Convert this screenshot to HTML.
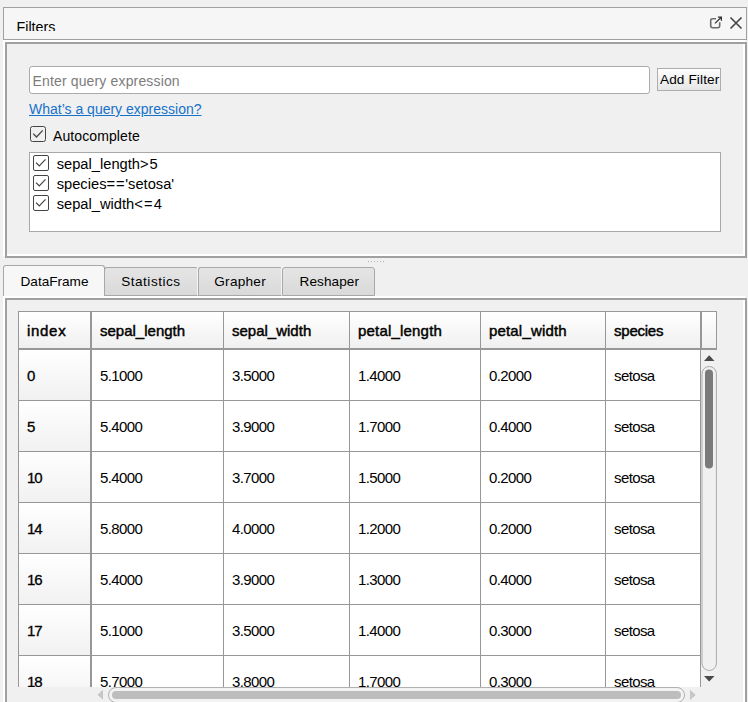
<!DOCTYPE html>
<html><head><meta charset="utf-8">
<style>
*{box-sizing:border-box;margin:0;padding:0}
html,body{width:748px;height:702px;overflow:hidden;background:#f0f0f0;font-family:"Liberation Sans",sans-serif;color:#000}
.a{position:absolute}
.t{position:absolute;white-space:pre;line-height:1}
#title{left:3px;top:7px;width:744px;height:33px;border:1px solid #a0a0a0;background:#f6f6f6}
.fr{position:absolute;border:2px solid #a0a0a0}
.frw{position:absolute;border:2px solid #ffffff}
#q{left:29px;top:66px;width:621px;height:28px;border:1px solid #ababab;border-radius:3px;background:#fff}
#btn{left:657px;top:68px;width:64px;height:23px;border:1px solid #adadad;background:linear-gradient(#fdfdfd,#e6e6e6)}
.cb{position:absolute;border:1.6px solid #444;border-radius:2.5px;background:#f0f0f0}
#list{left:29px;top:152px;width:692px;height:80px;border:1px solid #a8a8a8;background:#fff}
.tab{position:absolute;border:1px solid #a8a8a8;border-radius:3px 3px 0 0;background:linear-gradient(#e5e5e5,#d9d9d9)}
.hc{position:absolute;background:linear-gradient(#ffffff,#f0f0f0)}
.ic{position:absolute;background:linear-gradient(#ffffff,#f1f1f1)}
.hl{position:absolute;background:#979797}
.th{font-size:15px;font-weight:normal;-webkit-text-stroke:0.45px #000;letter-spacing:-0.1px}
.td{font-size:15px;letter-spacing:-0.6px}
.ti{font-size:15px;-webkit-text-stroke:0.3px #000;letter-spacing:-1.1px}
</style></head><body>

<!-- title bar -->
<div id="title" class="a"></div>
<div class="a" style="left:4px;top:8px;width:300px;height:23px;overflow:hidden">
  <div class="t" style="left:12.5px;top:12px;font-size:14.3px">Filters</div>
</div>
<svg class="a" style="left:705px;top:12px" width="40" height="20" viewBox="705 12 40 20">
  <path d="M716 18.7 H712.3 Q710.7 18.7 710.7 20.3 V26.1 Q710.7 27.7 712.3 27.7 H718.1 Q719.7 27.7 719.7 26.1 V22.3" fill="none" stroke="#6c6c6c" stroke-width="1.6"/>
  <path d="M715 23.4 L721.2 17.3 M717.9 17.2 H721.4 V20.8" fill="none" stroke="#333" stroke-width="1.25"/>
  <path d="M730.5 17.5 L741.5 28.5 M741.5 17.5 L730.5 28.5" stroke="#444" stroke-width="1.6"/>
</svg>

<!-- filters panel frame -->
<div class="frw" style="left:3px;top:40px;width:742px;height:216px"></div>
<div class="fr" style="left:5px;top:42px;width:742px;height:216px"></div>

<div id="q" class="a"></div>
<div class="t" style="left:32.5px;top:74px;font-size:14px;color:#7c7c7c;letter-spacing:0.15px">Enter query expression</div>

<div id="btn" class="a"></div>
<div class="t" style="left:660px;top:73.4px;font-size:13.6px;letter-spacing:0.12px">Add Filter</div>

<div class="t" style="left:29px;top:102px;font-size:14px;color:#1672c9;text-decoration:underline">What’s a query expression?</div>

<div class="cb" style="left:30px;top:126px;width:16px;height:16px"></div>
<svg class="a" style="left:30px;top:126px" width="16" height="16" viewBox="30 126 16 16"><path d="M33.2 133.6 L36.5 137 L42.7 130.4" fill="none" stroke="#444" stroke-width="1.3"/></svg>
<div class="t" style="left:53px;top:128.5px;font-size:14px;letter-spacing:0.1px">Autocomplete</div>

<div id="list" class="a"></div>
<div class="cb" style="left:33px;top:155px;width:16px;height:16px;background:#fff;border-width:1.6px;border-radius:2px"></div>
<div class="cb" style="left:33px;top:175px;width:16px;height:16px;background:#fff;border-width:1.6px;border-radius:2px"></div>
<div class="cb" style="left:33px;top:195px;width:16px;height:16px;background:#fff;border-width:1.6px;border-radius:2px"></div>
<svg class="a" style="left:33px;top:155px" width="16" height="60" viewBox="33 155 16 60">
  <path d="M36 162.6 L39.3 166 L45.5 159.4 M36 182.6 L39.3 186 L45.5 179.4 M36 202.6 L39.3 206 L45.5 199.4" fill="none" stroke="#444" stroke-width="1.2"/>
</svg>
<div class="t" style="left:56.7px;top:157px;font-size:14.7px">sepal_length<span style="letter-spacing:0.8px">&gt;</span>5</div>
<div class="t" style="left:56.7px;top:177px;font-size:14.7px">species<span style="letter-spacing:0.8px">==</span>'setosa'</div>
<div class="t" style="left:56.7px;top:197px;font-size:14.7px">sepal_width<span style="letter-spacing:1.2px">&lt;=</span>4</div>

<!-- splitter dots -->
<svg class="a" style="left:366px;top:259px" width="20" height="5" viewBox="366 259 20 5">
  <g fill="#b4b4b4"><rect x="368" y="261" width="1" height="1"/><rect x="371" y="261" width="1" height="1"/><rect x="374" y="261" width="1" height="1"/><rect x="377" y="261" width="1" height="1"/><rect x="380" y="261" width="1" height="1"/><rect x="383" y="261" width="1" height="1"/></g>
</svg>

<!-- tabs -->
<div class="tab" style="left:104px;top:267px;width:94px;height:29px;border-right-color:#f4f4f4"></div>
<div class="tab" style="left:198px;top:267px;width:84px;height:29px;border-right-color:#f4f4f4"></div>
<div class="tab" style="left:282px;top:267px;width:93px;height:29px"></div>
<div class="tab" style="left:3px;top:265px;width:102px;height:32px;background:#f7f7f7;border-bottom:none"></div>
<div class="t" style="left:20.5px;top:275.2px;font-size:13.6px;letter-spacing:0px">DataFrame</div>
<div class="t" style="left:121.2px;top:275.2px;font-size:13.6px;letter-spacing:0.5px">Statistics</div>
<div class="t" style="left:214.3px;top:275.2px;font-size:13.6px;letter-spacing:0.25px">Grapher</div>
<div class="t" style="left:299.5px;top:275.2px;font-size:13.6px;letter-spacing:0.08px">Reshaper</div>

<!-- tab pane frame -->
<div class="frw" style="left:3px;top:296px;width:742px;height:420px"></div>
<div class="fr" style="left:5px;top:298px;width:742px;height:420px"></div>

<!-- table -->
<div id="table" class="a" style="left:18px;top:311px;width:699px;height:376px;overflow:hidden">
<div class="a" style="left:1px;top:39px;width:681px;height:400px;background:#fff"></div>
<div class="ic" style="left:1px;top:39px;width:71px;height:50px"></div>
<div class="ic" style="left:1px;top:90px;width:71px;height:50px"></div>
<div class="ic" style="left:1px;top:141px;width:71px;height:50px"></div>
<div class="ic" style="left:1px;top:192px;width:71px;height:50px"></div>
<div class="ic" style="left:1px;top:243px;width:71px;height:50px"></div>
<div class="ic" style="left:1px;top:294px;width:71px;height:50px"></div>
<div class="ic" style="left:1px;top:345px;width:71px;height:50px"></div>
<div class="hc" style="left:1px;top:1px;width:71px;height:36px"></div>
<div class="hc" style="left:74px;top:1px;width:131px;height:36px"></div>
<div class="hc" style="left:206px;top:1px;width:125px;height:36px"></div>
<div class="hc" style="left:332px;top:1px;width:130px;height:36px"></div>
<div class="hc" style="left:463px;top:1px;width:124px;height:36px"></div>
<div class="hc" style="left:588px;top:1px;width:94px;height:36px"></div>
<div class="hc" style="left:684px;top:1px;width:14px;height:36px"></div>
<div class="hl" style="left:0;top:0;width:699px;height:1px"></div>
<div class="hl" style="left:0;top:37px;width:699px;height:2px"></div>
<div class="hl" style="left:0;top:89px;width:683px;height:1px"></div>
<div class="hl" style="left:0;top:140px;width:683px;height:1px"></div>
<div class="hl" style="left:0;top:191px;width:683px;height:1px"></div>
<div class="hl" style="left:0;top:242px;width:683px;height:1px"></div>
<div class="hl" style="left:0;top:293px;width:683px;height:1px"></div>
<div class="hl" style="left:0;top:344px;width:683px;height:1px"></div>
<div class="hl" style="left:0px;top:0;width:1px;height:400px"></div>
<div class="hl" style="left:72px;top:0;width:2px;height:400px"></div>
<div class="hl" style="left:205px;top:0;width:1px;height:400px"></div>
<div class="hl" style="left:331px;top:0;width:1px;height:400px"></div>
<div class="hl" style="left:462px;top:0;width:1px;height:400px"></div>
<div class="hl" style="left:587px;top:0;width:1px;height:400px"></div>
<div class="hl" style="left:682px;top:0;width:1px;height:400px"></div>
<div class="hl" style="left:682px;top:0;width:2px;height:39px"></div>
<div class="hl" style="left:698px;top:0;width:1px;height:39px"></div>
<div class="t th" style="left:9px;top:12px;letter-spacing:0.7px">index</div>
<div class="t th" style="left:82px;top:12px;letter-spacing:0.0px">sepal_length</div>
<div class="t th" style="left:214px;top:12px;letter-spacing:0.0px">sepal_width</div>
<div class="t th" style="left:340px;top:12px;letter-spacing:0.19px">petal_length</div>
<div class="t th" style="left:471px;top:12px;letter-spacing:0.17px">petal_width</div>
<div class="t th" style="left:596px;top:12px;letter-spacing:-0.23px">species</div>
<div class="t ti" style="left:9px;top:56.6px">0</div>
<div class="t td" style="left:82px;top:57.0px">5.1000</div>
<div class="t td" style="left:214px;top:57.0px">3.5000</div>
<div class="t td" style="left:340px;top:57.0px">1.4000</div>
<div class="t td" style="left:471px;top:57.0px">0.2000</div>
<div class="t td" style="left:596px;top:57.0px">setosa</div>
<div class="t ti" style="left:9px;top:107.6px">5</div>
<div class="t td" style="left:82px;top:108.0px">5.4000</div>
<div class="t td" style="left:214px;top:108.0px">3.9000</div>
<div class="t td" style="left:340px;top:108.0px">1.7000</div>
<div class="t td" style="left:471px;top:108.0px">0.4000</div>
<div class="t td" style="left:596px;top:108.0px">setosa</div>
<div class="t ti" style="left:9px;top:158.6px">10</div>
<div class="t td" style="left:82px;top:159.0px">5.4000</div>
<div class="t td" style="left:214px;top:159.0px">3.7000</div>
<div class="t td" style="left:340px;top:159.0px">1.5000</div>
<div class="t td" style="left:471px;top:159.0px">0.2000</div>
<div class="t td" style="left:596px;top:159.0px">setosa</div>
<div class="t ti" style="left:9px;top:209.6px">14</div>
<div class="t td" style="left:82px;top:210.0px">5.8000</div>
<div class="t td" style="left:214px;top:210.0px">4.0000</div>
<div class="t td" style="left:340px;top:210.0px">1.2000</div>
<div class="t td" style="left:471px;top:210.0px">0.2000</div>
<div class="t td" style="left:596px;top:210.0px">setosa</div>
<div class="t ti" style="left:9px;top:260.6px">16</div>
<div class="t td" style="left:82px;top:261.0px">5.4000</div>
<div class="t td" style="left:214px;top:261.0px">3.9000</div>
<div class="t td" style="left:340px;top:261.0px">1.3000</div>
<div class="t td" style="left:471px;top:261.0px">0.4000</div>
<div class="t td" style="left:596px;top:261.0px">setosa</div>
<div class="t ti" style="left:9px;top:311.6px">17</div>
<div class="t td" style="left:82px;top:312.0px">5.1000</div>
<div class="t td" style="left:214px;top:312.0px">3.5000</div>
<div class="t td" style="left:340px;top:312.0px">1.4000</div>
<div class="t td" style="left:471px;top:312.0px">0.3000</div>
<div class="t td" style="left:596px;top:312.0px">setosa</div>
<div class="t ti" style="left:9px;top:362.6px">18</div>
<div class="t td" style="left:82px;top:363.0px">5.7000</div>
<div class="t td" style="left:214px;top:363.0px">3.8000</div>
<div class="t td" style="left:340px;top:363.0px">1.7000</div>
<div class="t td" style="left:471px;top:363.0px">0.3000</div>
<div class="t td" style="left:596px;top:363.0px">setosa</div>
</div><!-- /table -->


<!-- scrollbars -->
<svg class="a" style="left:0;top:0" width="748" height="702" viewBox="0 0 748 702">
  <path d="M704 361 L714.5 361 L709.2 355.2 Z" fill="#4a4a4a"/>
  <rect x="702" y="366.5" width="14.4" height="304" rx="7.2" ry="7.2" fill="none" stroke="#a9a9a9" stroke-width="1"/>
  <rect x="705" y="369.5" width="8" height="99" rx="4" ry="4" fill="#7a7a7a"/>
  <path d="M704 676 L714.5 676 L709.2 681.6 Z" fill="#4a4a4a"/>
  <path d="M103 689.7 L103 699.8 L97.4 694.7 Z" fill="#c6c6c6"/>
  <rect x="108.5" y="687.5" width="576" height="15" rx="7.5" ry="7.5" fill="#f2f2f2" stroke="#b0b0b0" stroke-width="1"/>
  <rect x="112" y="691" width="569" height="8" rx="4" ry="4" fill="#bdbdbd"/>
  <path d="M690 689.8 L690 700 L695.7 695 Z" fill="#c6c6c6"/>
</svg>
</body></html>
